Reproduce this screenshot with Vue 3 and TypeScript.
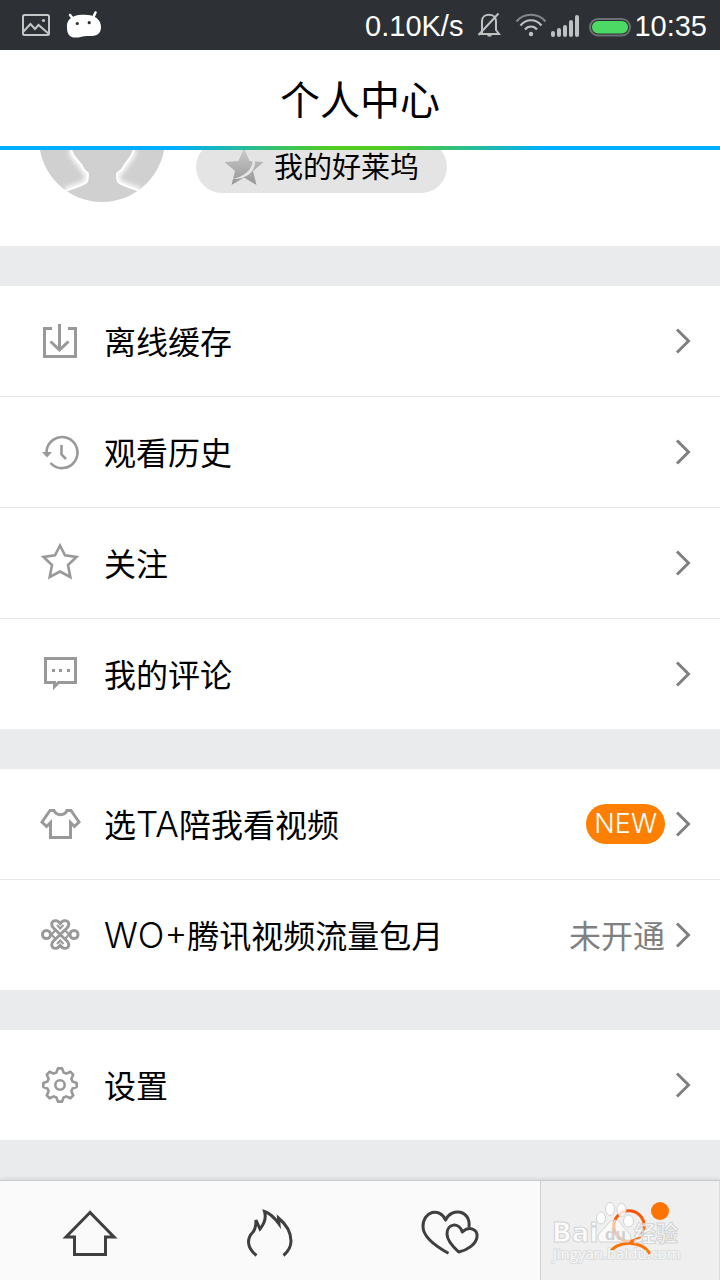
<script setup lang="ts">
import { ref } from 'vue'

interface MenuItem {
  icon: string
  cjk: string
  latin?: string
  lead?: string
  badge?: string
  status?: string
}

const groups: MenuItem[][] = [
  [
    { icon: 'download', cjk: '离线缓存' },
    { icon: 'history', cjk: '观看历史' },
    { icon: 'star', cjk: '关注' },
    { icon: 'comment', cjk: '我的评论' },
  ],
  [
    { icon: 'shirt', lead: '选', latin: 'TA', cjk: '陪我看视频', badge: 'NEW' },
    { icon: 'knot', latin: 'WO+', cjk: '腾讯视频流量包月', status: '未开通' },
  ],
  [{ icon: 'gear', cjk: '设置' }],
]

const tabs = [
  { id: 'home', label: '首页' },
  { id: 'hot', label: '热点' },
  { id: 'likes', label: '喜欢' },
  { id: 'me', label: '个人中心' },
]
const active = ref('me')

const gearPath = (() => {
  const points: string[] = []
  const add = (deg: number, r: number) => {
    const a = (deg * Math.PI) / 180
    points.push(`${(20 + r * Math.cos(a)).toFixed(2)} ${(20 + r * Math.sin(a)).toFixed(2)}`)
  }
  for (let k = 0; k < 8; k++) {
    add(k * 45 - 16, 13)
    add(k * 45 - 7, 16.8)
    add(k * 45 + 7, 16.8)
    add(k * 45 + 16, 13)
  }
  return `M${points.join('L')}Z`
})()
</script>

<template>
  <div class="screen">
    <header class="status-bar">
      <svg class="notices" width="86" height="50" viewBox="20 0 86 50" aria-hidden="true">
        <g fill="none" stroke="#c4c6c8" stroke-width="2">
          <rect x="23" y="15" width="26" height="20" rx="1.500" />
          <path d="M23 32L30.500 24L35 29L38.500 25L49 34" />
        </g>
        <circle cx="43.500" cy="20.500" r="1.600" fill="#c4c6c8" />
        <g fill="#fff">
          <path d="M67 28C66 20 72 15 82 14.800C94 14 101 19 101 27C101 34 96 36.500 89 36C83 35.500 80 38 74 37.500C69 37 67 33 67 28Z" />
          <path d="M70 15L74 20M95.500 12.500L92.500 19" stroke="#fff" stroke-width="2.600" stroke-linecap="round" />
        </g>
        <circle cx="77.300" cy="23.500" r="1.600" fill="#2d3035" />
        <circle cx="89.200" cy="22.700" r="1.600" fill="#2d3035" />
      </svg>
      <span class="status-text rate">0.10K/s</span>
      <svg width="164" height="50" viewBox="470 0 164 50" aria-hidden="true">
        <g fill="none" stroke="#bfc1c3" stroke-width="2">
          <path d="M482 33V21C482 12.500 496 12.500 496 21V30L499 34H479.500M478.500 35L498.500 13.500" />
          <path d="M487.500 35.500H491.500" />
        </g>
        <g fill="none" stroke="#bfc1c3" stroke-width="2.200">
          <path d="M516.500 21.500C524 12.500 538 12.500 545.500 21.500" stroke="#84878a" />
          <path d="M520.500 25.500C526 18.500 536 18.500 541.500 25.500" />
          <path d="M525 29.500C528 25.500 534 25.500 537 29.500" />
        </g>
        <circle cx="531" cy="34" r="2.200" fill="#bfc1c3" />
        <g stroke="#bfc1c3" stroke-width="4" stroke-linecap="round">
          <path d="M553 33V35M559 30V35M565 27V35M571 22V35M577 17V35" />
        </g>
        <rect x="590" y="19" width="40" height="16.500" rx="8.200" fill="none" stroke="#6d7073" stroke-width="2" />
        <rect x="592" y="21" width="36" height="12.500" rx="6.200" fill="#4cd964" />
      </svg>
      <span class="status-text">10:35</span>
    </header>

    <div class="title-bar">
      <h1>个人中心</h1>
    </div>

    <main class="content">
      <section class="profile">
        <svg class="avatar" width="126" height="126" viewBox="0 0 126 126" role="img" aria-label="头像">
          <defs>
            <clipPath id="avatar-clip"><circle cx="63" cy="63" r="63" /></clipPath>
            <filter id="avatar-glow" x="-30%" y="-30%" width="160%" height="160%">
              <feGaussianBlur stdDeviation="2.500" />
            </filter>
            <clipPath id="avatar-back">
              <path d="M0 66H30L32 74C35 84 42 86 44 92C45 96 49 95 49 99C49 108 49 107 26 115L0 126ZM126 66H98L95 74C92 84 86 86 84 92C82 96 78 95 78 99C78 108 78 107 101 115L126 126Z" />
            </clipPath>
          </defs>
          <g clip-path="url(#avatar-clip)">
            <rect width="126" height="126" fill="#d0d0d0" />
            <g fill="none" stroke="#fff">
              <g clip-path="url(#avatar-back)">
                <path d="M32 74C35 84 42 86 44 92C45 96 49 95 49 99C49 108 49 107 26 115M95 74C92 84 86 86 84 92C82 96 78 95 78 99C78 108 78 107 101 115" stroke-width="6" filter="url(#avatar-glow)" />
              </g>
              <path d="M30 66L32 74C35 84 42 86 44 92C45 96 49 95 49 99C49 108 49 107 26 115M98 66L95 74C92 84 86 86 84 92C82 96 78 95 78 99C78 108 78 107 101 115" stroke-width="2" />
            </g>
          </g>
        </svg>
        <button class="pill" type="button">
          <svg width="40" height="40" viewBox="0 0 40 40" aria-hidden="true">
            <defs>
              <linearGradient id="star-fill" x1="0" y1="0" x2="0" y2="1">
                <stop offset="0" stop-color="#ccc" />
                <stop offset="1" stop-color="#969696" />
              </linearGradient>
            </defs>
            <path d="M20 1L25.500 14L39.500 15L29 24L32.500 38L20 30.500L7.500 38L11 24L0.500 15L14.500 14Z" fill="url(#star-fill)" />
            <path d="M26 3C37 15 30 33 7 32C24 30 34 17 26 3Z" fill="#e6e6e6" />
          </svg>
          <span class="pill-label">我的好莱坞</span>
        </button>
      </section>

      <nav v-for="(group, g) in groups" :key="g" class="group">
        <a v-for="item in group" :key="item.icon" class="row" href="#">
          <svg class="row-icon" width="40" height="40" viewBox="0 0 40 40" aria-hidden="true">
            <g v-if="item.icon === 'download'">
              <path d="M12 7.500H4.500V35.500H35.500V7.500H28M19.500 3V28M10.500 20.500L19.500 29L28.500 20.500" />
            </g>
            <g v-else-if="item.icon === 'history'">
              <path d="M10.500 31A15.500 15.500 0 1 0 6.500 20M21.500 13V22.500L26 27" stroke-width="2.600" />
              <path class="solid" d="M2 20H12L7 25.500Z" />
            </g>
            <path v-else-if="item.icon === 'star'" d="M20 2.500L25 12.300L36.500 14L28 22L30.300 34L20 28.500L9.700 34L12 22L3.500 14L15 12.300Z" stroke-width="2.600" />
            <g v-else-if="item.icon === 'comment'">
              <path d="M5.500 4.500H35.500V28.500H18.500L14.500 32.500V28.500H5.500Z" />
              <path class="solid" d="M12 15H15V18H12ZM19 15H22V18H19ZM27 15H30V18H27ZM13 29H19L13 36Z" />
            </g>
            <path v-else-if="item.icon === 'shirt'" d="M10 6.500L2 18L6.500 22.500L10.500 18.500V33.500H30.500V18.500L34.500 22.500L39 18L31 6.500H27C25 12 16 12 14 6.500Z" />
            <g v-else-if="item.icon === 'knot'">
              <circle cx="6.500" cy="19.500" r="4" />
              <circle cx="34" cy="19.500" r="4" />
              <path d="M20.200 19.500L13.500 13C8.500 8 15 2 20.200 8.500C25.500 2 32 8 27 13ZM20.200 19.500L13.500 26C8.500 31 15 37 20.200 30.500C25.500 37 32 31 27 26Z" />
              <path d="M17 10L20.200 13.500L23.500 10M17 29L20.200 25.500L23.500 29M15.500 15L11.500 19.500L15.500 24M25 15L29 19.500L25 24" stroke-width="2" />
            </g>
            <g v-else>
              <path :d="gearPath" stroke-width="2.600" stroke-linejoin="round" />
              <circle cx="20" cy="20" r="4.700" stroke-width="2.600" />
            </g>
          </svg>
          <span class="label">{{ item.lead }}<span v-if="item.latin" class="latin">{{ item.latin }}</span>{{ item.cjk }}</span>
          <span v-if="item.badge" class="badge">{{ item.badge }}</span>
          <span v-if="item.status" class="status">{{ item.status }}</span>
          <svg width="16" height="28" viewBox="0 0 16 28" aria-hidden="true">
            <path d="M2 2.500L13.500 14L2 25.500" fill="none" stroke="#808080" stroke-width="3" />
          </svg>
        </a>
      </nav>
    </main>

    <nav class="tabs">
      <button
        v-for="tab in tabs"
        :key="tab.id"
        type="button"
        :class="['tab', { active: active === tab.id }]"
        :aria-label="tab.label"
        @click="active = tab.id"
      >
        <svg width="60" height="60" viewBox="0 0 60 60" aria-hidden="true">
          <path v-if="tab.id === 'home'" d="M30 11.500L6 36H14.500V53.500H45.500V36H54Z" />
          <path v-else-if="tab.id === 'hot'" d="M16.500 54.500C6 46 7 37 13 31C15.500 28 16 25 16 19L20 28C25 22 26.500 17 24.500 10.500C29 12 34 16 39 23L38.500 17C47 24 51 31 51 40C51 47 47.500 51 43.500 54.500" />
          <g v-else-if="tab.id === 'likes'" stroke-linejoin="round">
            <path d="M28.500 52.300C17 46 3 36 3 25.500C3 10 20 6 25.500 19C32 6 51 9 49 26" />
            <path d="M38.700 51C30 43 27 38 27 33C27 22 39 21 42.300 31C49 24.500 58 28 57 36C56 43 48 49 38.700 51Z" />
          </g>
          <g v-else>
            <defs>
              <linearGradient id="me-stroke" gradientUnits="userSpaceOnUse" x1="0" y1="10" x2="0" y2="53">
                <stop offset="0" stop-color="#ff5000" />
                <stop offset="1" stop-color="#ff7a00" />
              </linearGradient>
            </defs>
            <circle cx="29" cy="25" r="15.200" stroke="url(#me-stroke)" />
            <path d="M9 53C16 38.500 42 38.500 50 53" stroke="url(#me-stroke)" />
            <circle cx="60" cy="10" r="9" fill="#ff7300" stroke="none" />
          </g>
        </svg>
      </button>
      <svg class="watermark" width="136" height="64" viewBox="0 0 136 64" aria-hidden="true">
        <g fill="#fff" fill-opacity="0.8" stroke="#d2d3d3" stroke-width="1">
          <text class="wm-brand" x="1" y="42">Bai</text>
          <ellipse cx="50" cy="18" rx="4.500" ry="6" />
          <ellipse cx="59" cy="9" rx="4.500" ry="6.500" />
          <ellipse cx="70.500" cy="10" rx="4.500" ry="6.500" />
          <ellipse cx="77.500" cy="21" rx="5" ry="6" />
          <path d="M49 42C43 35 52 31 56 25C60 18 69 19 71 25C74 31 84 35 78 42Z" fill-opacity="0.6" />
          <text class="wm-cjk" x="83" y="41">经验</text>
        </g>
        <text class="wm-du" x="54" y="40">du</text>
        <text class="wm-url" x="2" y="59">jingyan.baidu.com</text>
      </svg>
    </nav>
  </div>
</template>

<style>
body {
  margin: 0;
  background: #eaebed;
}
</style>

<style scoped>
.screen {
  display: flex;
  flex-direction: column;
  min-height: 100vh;
  background: #eaebed;
  color: #000;
  font-family: "Noto Sans CJK SC", sans-serif;
}

.status-bar {
  display: flex;
  align-items: center;
  height: 50px;
  padding: 0 13px 0 20px;
  background: #2d3035;
}

.notices {
  margin-right: auto;
}

.status-text {
  color: #fff;
  font: 29px/50px "Liberation Sans", Arial, sans-serif;
  padding-top: 2px;
}

.rate {
  margin-right: 7px;
}

.title-bar {
  background: linear-gradient(90deg, #00aeff 24%, #52cc1f 46%, #52cc1f 54%, #00aeff 76%) bottom / 100% 4px no-repeat #fff;
  padding-bottom: 4px;
}

h1 {
  margin: 0;
  font-size: 40px;
  font-weight: 400;
  line-height: 96px;
  text-align: center;
}

.content {
  flex: 1;
  display: flex;
  flex-direction: column;
  gap: 40px;
  padding-bottom: 40px;
}

.profile {
  display: flex;
  align-items: flex-end;
  gap: 31px;
  box-sizing: border-box;
  height: 96px;
  padding: 0 39px 44px;
  overflow: hidden;
  background: #fff;
}

.avatar {
  flex: none;
}

.pill {
  display: flex;
  align-items: center;
  gap: 10px;
  height: 52px;
  margin: 0 0 9px;
  padding: 0 28px;
  border: 0;
  border-radius: 26px;
  background: #e4e4e4;
  color: #000;
  font: 29px/32px "Noto Sans CJK SC", sans-serif;
}

.pill-label {
  padding-bottom: 4px;
}

.group {
  background: #fff;
}

.row {
  display: flex;
  align-items: center;
  min-height: 110px;
  padding: 0 29px 0 40px;
  color: inherit;
  text-decoration: none;
}

.row + .row {
  border-top: 1px solid #e8e8e8;
}

.row-icon {
  flex: none;
  overflow: visible;
  fill: none;
  stroke: #999;
  stroke-width: 3;
}

.solid {
  fill: #999;
  stroke: none;
}

.label {
  flex: 1;
  margin-left: 24px;
  padding-bottom: 2px;
  font-size: 32px;
  line-height: 48px;
}

.latin {
  font-family: Inter, "Liberation Sans", sans-serif;
  font-size: 35px;
  font-weight: 300;
}

.badge {
  margin-right: 10px;
  padding: 0 8px;
  border-radius: 20px;
  background: #ff8000;
  color: #fff;
  font: 300 27px/40px Inter, "Liberation Sans", sans-serif;
}

.status {
  margin-right: 10px;
  padding-bottom: 2px;
  color: #808080;
  font-size: 32px;
  line-height: 48px;
}

.tabs {
  position: relative;
  display: grid;
  grid-template-columns: repeat(4, 1fr);
  border-top: 1px solid #c9cacb;
  box-shadow: 0 -1px 4px rgba(0, 0, 0, 0.1);
  background: #fafafa;
}

.tab {
  display: flex;
  justify-content: center;
  height: 99px;
  padding: 20px 0 0;
  border: 0;
  background: none;
}

.tab svg {
  overflow: visible;
  fill: none;
  stroke: #3f3f3f;
  stroke-width: 3;
}

.tab.active {
  background: #efefef;
  box-shadow: inset 1px 0 #cfcfcf, inset -1px 0 #dcdcdc;
}

.watermark {
  position: absolute;
  right: 33px;
  bottom: 16px;
  pointer-events: none;
}

.wm-brand {
  font: 700 26px "DejaVu Sans", sans-serif;
}

.wm-cjk {
  font: 700 22px "Noto Sans CJK SC", sans-serif;
}

.wm-url {
  fill: #fff;
  fill-opacity: 0.8;
  stroke: #dcdddd;
  stroke-width: 2px;
  paint-order: stroke;
  font: 15px "Open Sans", sans-serif;
}

.wm-du {
  fill: #cfcfcf;
  font: 700 17px "Liberation Sans", Arial, sans-serif;
}
</style>
